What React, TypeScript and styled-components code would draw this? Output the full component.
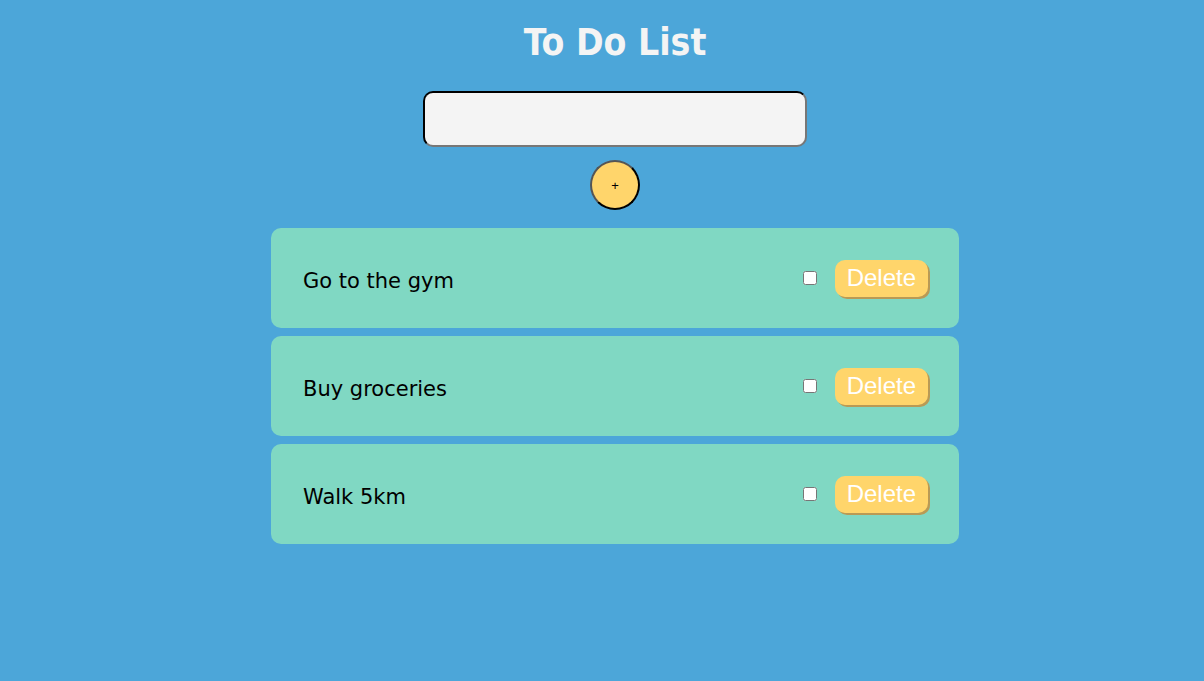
import styled, { createGlobalStyle } from 'styled-components';
import { useState } from 'react';

const GlobalStyle = createGlobalStyle`
  html, body {
    margin: 0;
    padding: 0;
    background-color: #4ca6d9;
    font-family: 'Trebuchet MS', 'DejaVu Sans', sans-serif;
  }
`;

type Todo = { id: number; text: string; done: boolean };

const initialTodos: Todo[] = [
  { id: 1, text: 'Go to the gym', done: false },
  { id: 2, text: 'Buy groceries', done: false },
  { id: 3, text: 'Walk 5km', done: false },
];

export default function App() {
  const [todos, setTodos] = useState<Todo[]>(initialTodos);
  const [value, setValue] = useState('');

  const addTodo = () => {
    if (!value.trim()) return;
    setTodos([...todos, { id: Date.now(), text: value, done: false }]);
    setValue('');
  };

  const toggle = (id: number) => {
    setTodos(todos.map((t) => (t.id === id ? { ...t, done: !t.done } : t)));
  };

  const remove = (id: number) => {
    setTodos(todos.filter((t) => t.id !== id));
  };

  return (
    <>
      <GlobalStyle />
      <SContainer>
        <Title>To Do List</Title>
        <TodoInput value={value} onChange={(e) => setValue(e.target.value)} />
        <AddButton onClick={addTodo}>+</AddButton>
        <List>
          {todos.map((t) => (
            <Card key={t.id}>
              <TodoText>{t.text}</TodoText>
              <Actions>
                <Check type="checkbox" checked={t.done} onChange={() => toggle(t.id)} />
                <DeleteButton onClick={() => remove(t.id)}>Delete</DeleteButton>
              </Actions>
            </Card>
          ))}
        </List>
      </SContainer>
    </>
  );
}

const SContainer = styled.div`
  display: flex;
  flex-direction: column;
  align-items: center;
  padding-top: 21px;
  padding-left: 26px;
`;

const Title = styled.h1`
  margin: 0 0 26px;
  font-family: 'DejaVu Sans Condensed', 'DejaVu Sans', sans-serif;
  font-size: 37px;
  font-weight: 700;
  color: #f4f4f4;
  line-height: 44px;
`;

const TodoInput = styled.input`
  box-sizing: border-box;
  width: 384px;
  height: 56px;
  border-radius: 10px;
  border: 2px inset #222;
  border-bottom-color: #777;
  border-right-color: #777;
  background-color: #f4f4f4;
  outline: none;
  font-size: 18px;
  padding: 0 12px;
`;

const AddButton = styled.button`
  box-sizing: border-box;
  margin-top: 13px;
  width: 50px;
  height: 50px;
  border-radius: 50%;
  border: 2px outset #222;
  border-top-color: #555;
  border-left-color: #555;
  background-color: #ffd56b;
  color: #000;
  font-size: 13px;
  font-family: Arial, 'Liberation Sans', sans-serif;
  padding: 0;
  cursor: pointer;
`;

const List = styled.div`
  display: flex;
  flex-direction: column;
  gap: 8px;
  margin-top: 18px;
  width: 688px;
`;

const Card = styled.div`
  display: flex;
  align-items: center;
  justify-content: space-between;
  height: 100px;
  box-sizing: border-box;
  padding: 0 31px 0 32px;
  border-radius: 10px;
  background-color: #80d8c3;
`;

const TodoText = styled.span`
  margin-top: 6px;
  font-family: 'DejaVu Sans', sans-serif;
  font-size: 21px;
  color: #000;
`;

const Actions = styled.div`
  display: flex;
  align-items: center;
  gap: 18px;
`;

const Check = styled.input`
  margin: 0;
  width: 14px;
  height: 14px;
`;

const DeleteButton = styled.button`
  height: 37px;
  padding: 0 12px;
  border: none;
  border-radius: 10px;
  background-color: #ffd56b;
  color: #fff;
  font-family: Arial, 'Liberation Sans', sans-serif;
  font-size: 24px;
  box-shadow: 2px 2px 0 #b99a55;
  cursor: pointer;
`;
